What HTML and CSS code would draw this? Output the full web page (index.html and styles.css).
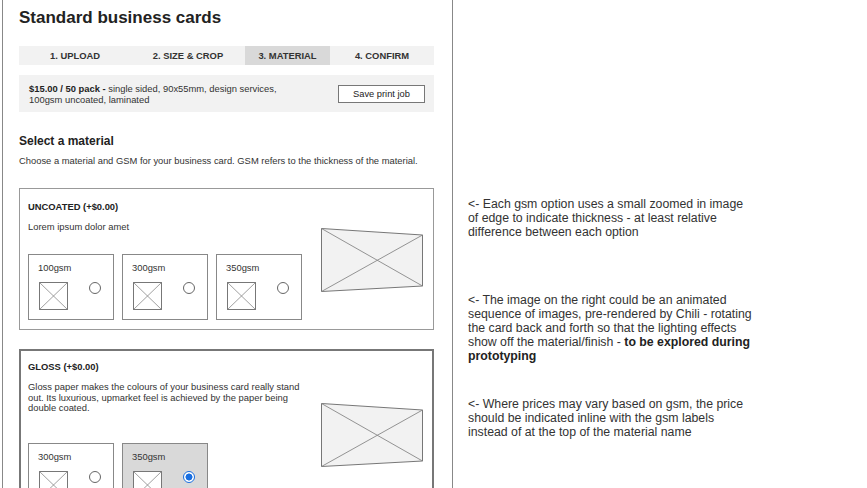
FILE: index.html
```html
<!DOCTYPE html>
<html lang="en">
<head>
<meta charset="utf-8">
<title>Standard business cards</title>
<link rel="stylesheet" href="styles.css">
</head>
<body>
<div class="page">
  <section class="panel">
    <h1 class="title">Standard business cards</h1>
    <nav class="tabs">
      <div class="tab">1. UPLOAD</div>
      <div class="tab">2. SIZE &amp; CROP</div>
      <div class="tab active">3. MATERIAL</div>
      <div class="tab">4. CONFIRM</div>
    </nav>
    <div class="summary">
      <p class="summary-text"><b>$15.00 / 50 pack -</b> single sided, 90x55mm, design services,<br>100gsm uncoated, laminated</p>
      <button class="btn">Save print job</button>
    </div>
    <h2 class="section-title">Select a material</h2>
    <p class="section-desc">Choose a material and GSM for your business card. GSM refers to the thickness of the material.</p>

    <div class="card">
      <div class="card-main">
        <div class="card-name">UNCOATED (+$0.00)</div>
        <p class="card-desc">Lorem ipsum dolor amet</p>
        <div class="options">
          <div class="option">
            <div class="opt-label">100gsm</div>
            <div class="opt-row">
              <svg class="thumb" width="29" height="28" viewBox="0 0 29 28"><rect x="0.5" y="0.5" width="28" height="27" fill="#fff" stroke="#777"/><path d="M0.5 0.5L28.5 27.5M28.5 0.5L0.5 27.5" stroke="#888" stroke-width="0.8"/></svg>
              <span class="radio"></span>
            </div>
          </div>
          <div class="option">
            <div class="opt-label">300gsm</div>
            <div class="opt-row">
              <svg class="thumb" width="29" height="28" viewBox="0 0 29 28"><rect x="0.5" y="0.5" width="28" height="27" fill="#fff" stroke="#777"/><path d="M0.5 0.5L28.5 27.5M28.5 0.5L0.5 27.5" stroke="#888" stroke-width="0.8"/></svg>
              <span class="radio"></span>
            </div>
          </div>
          <div class="option">
            <div class="opt-label">350gsm</div>
            <div class="opt-row">
              <svg class="thumb" width="29" height="28" viewBox="0 0 29 28"><rect x="0.5" y="0.5" width="28" height="27" fill="#fff" stroke="#777"/><path d="M0.5 0.5L28.5 27.5M28.5 0.5L0.5 27.5" stroke="#888" stroke-width="0.8"/></svg>
              <span class="radio"></span>
            </div>
          </div>
        </div>
      </div>
      <svg class="preview" width="102" height="64" viewBox="0 0 102 64"><polygon points="0.5,0.5 101.5,7 101.5,58 0.5,63.5" fill="#f2f2f2" stroke="#777"/><path d="M0.5 0.5L101.5 58M101.5 7L0.5 63.5" stroke="#888" stroke-width="0.9"/></svg>
    </div>

    <div class="card card-selected">
      <div class="card-main">
        <div class="card-name">GLOSS (+$0.00)</div>
        <p class="card-desc">Gloss paper makes the colours of your business card really stand out. Its luxurious, upmarket feel is achieved by the paper being double coated.</p>
        <div class="options options-spaced">
          <div class="option">
            <div class="opt-label">300gsm</div>
            <div class="opt-row">
              <svg class="thumb" width="29" height="28" viewBox="0 0 29 28"><rect x="0.5" y="0.5" width="28" height="27" fill="#fff" stroke="#777"/><path d="M0.5 0.5L28.5 27.5M28.5 0.5L0.5 27.5" stroke="#888" stroke-width="0.8"/></svg>
              <span class="radio"></span>
            </div>
          </div>
          <div class="option option-selected">
            <div class="opt-label">350gsm</div>
            <div class="opt-row">
              <svg class="thumb" width="29" height="28" viewBox="0 0 29 28"><rect x="0.5" y="0.5" width="28" height="27" fill="#fff" stroke="#777"/><path d="M0.5 0.5L28.5 27.5M28.5 0.5L0.5 27.5" stroke="#888" stroke-width="0.8"/></svg>
              <span class="radio radio-on"></span>
            </div>
          </div>
        </div>
      </div>
      <svg class="preview" width="102" height="64" viewBox="0 0 102 64"><polygon points="0.5,0.5 101.5,7 101.5,58 0.5,63.5" fill="#f2f2f2" stroke="#777"/><path d="M0.5 0.5L101.5 58M101.5 7L0.5 63.5" stroke="#888" stroke-width="0.9"/></svg>
    </div>
  </section>

  <aside class="notes">
    <p class="note note-1">&lt;- Each gsm option uses a small zoomed in image<br>of edge to indicate thickness - at least relative<br>difference between each option</p>
    <p class="note note-2">&lt;- The image on the right could be an animated<br>sequence of images, pre-rendered by Chili - rotating<br>the card back and forth so that the lighting effects<br>show off the material/finish - <b>to be explored during<br>prototyping</b></p>
    <p class="note note-3">&lt;- Where prices may vary based on gsm, the price<br>should be indicated inline with the gsm labels<br>instead of at the top of the material name</p>
  </aside>
</div>
</body>
</html>
```
FILE: styles.css
```css
* { box-sizing: border-box; }
html, body { margin: 0; padding: 0; }
body {
  font-family: "Liberation Sans", Arial, sans-serif;
  color: #333;
  background: #fff;
  overflow: hidden;
}
p { margin: 0; }
.page {
  display: flex;
  height: 488px;
  overflow: hidden;
}
.panel {
  flex: none;
  width: 451px;
  margin-left: 2px;
  padding: 8px 18px 0 16px;
  border-left: 1px solid #888;
  border-right: 1px solid #888;
  height: 100%;
  overflow: hidden;
}
.title {
  margin: 0;
  font-size: 17px;
  line-height: 20px;
  font-weight: bold;
  color: #222;
}
.tabs {
  margin-top: 18px;
  display: grid;
  grid-template-columns: 112px 114px 85px 104px;
  background: #f2f2f2;
  height: 19px;
}
.tab {
  font-size: 9.4px;
  line-height: 19px;
  font-weight: bold;
  text-align: center;
  color: #333;
}
.tab.active { background: #d9d9d9; }
.summary {
  margin-top: 10px;
  height: 37px;
  background: #f2f2f2;
  display: flex;
  align-items: center;
  justify-content: space-between;
  padding: 0 9px 0 10px;
}
.summary-text {
  font-size: 9.4px;
  line-height: 11px;
  color: #333;
}
.summary-text b { color: #222; }
.btn {
  width: 87px;
  height: 18px;
  padding: 0;
  background: #fff;
  border: 1px solid #777;
  font-family: inherit;
  font-size: 9.3px;
  color: #222;
}
.section-title {
  margin: 21px 0 0;
  font-size: 12px;
  line-height: 16px;
  font-weight: bold;
  color: #222;
}
.section-desc {
  margin-top: 5.5px;
  font-size: 9.4px;
  line-height: 11px;
  color: #333;
}
.card {
  margin-top: 22px;
  display: flex;
  align-items: center;
  border: 1px solid #999;
  padding: 12.5px 10px 9px 8px;
}
.card + .card { margin-top: 19px; }
.card-selected {
  border: 2px solid #777;
  padding: 10.5px 9px 9px 7px;
}
.card-main { width: 275px; }
.card-name {
  font-size: 9.4px;
  line-height: 11px;
  font-weight: bold;
  color: #222;
}
.card-desc {
  margin-top: 10px;
  font-size: 9.4px;
  line-height: 10.5px;
  color: #333;
}
.options {
  margin-top: 21px;
  display: flex;
  gap: 8px;
}
.options-spaced { margin-top: 29px; }
.option {
  width: 86px;
  height: 66px;
  border: 1px solid #888;
  background: #fff;
  padding: 8px 0 0 9px;
}
.option-selected { background: #d9d9d9; }
.opt-label {
  font-size: 9.4px;
  line-height: 10px;
  color: #333;
}
.opt-row {
  margin-top: 9px;
  display: flex;
  align-items: flex-start;
  gap: 21px;
}
.thumb { display: block; margin-left: 1px; }
.radio {
  width: 12px;
  height: 12px;
  border-radius: 50%;
  border: 1px solid #666;
  background: #fff;
}
.radio-on {
  border: 1.5px solid #1a6fe0;
  background: radial-gradient(circle, #1a6fe0 0 3.2px, #fff 3.8px);
}
.preview {
  display: block;
  margin-left: auto;
  flex: none;
}
.notes {
  flex: none;
  width: 330px;
  margin-left: 15px;
  font-size: 12.3px;
  line-height: 14px;
  color: #333;
}
.note { white-space: nowrap; }
.note b { color: #222; }
.note-1 { margin-top: 197px; }
.note-2 { margin-top: 54px; }
.note-3 { margin-top: 34px; }
```
